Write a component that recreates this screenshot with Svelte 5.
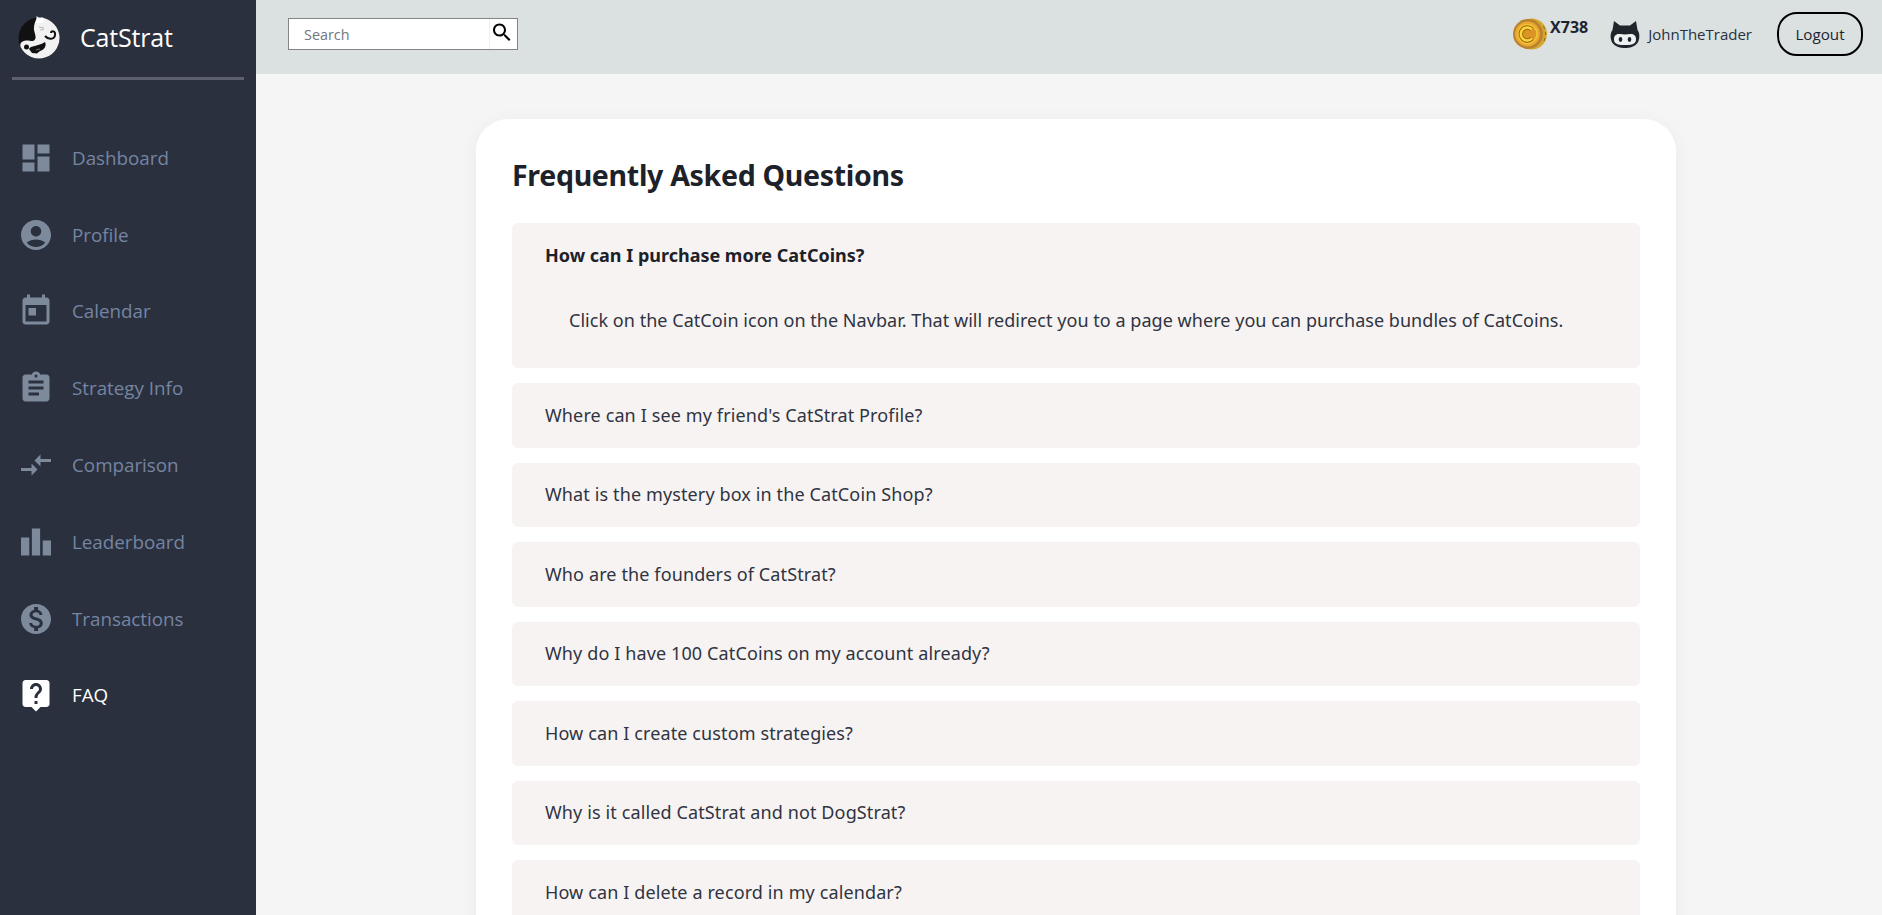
<script>
	const nav = [
		{ label: 'Dashboard', d: 'M3 13h8V3H3v10zm0 8h8v-6H3v6zm10 0h8V11h-8v10zm0-18v6h8V3h-8z' },
		{ label: 'Profile', d: 'M12 2C6.48 2 2 6.48 2 12s4.48 10 10 10 10-4.48 10-10S17.52 2 12 2zm0 4c1.93 0 3.5 1.57 3.5 3.5S13.93 13 12 13s-3.5-1.57-3.5-3.5S10.07 6 12 6zm0 14c-2.03 0-4.43-.82-6.14-2.88C7.55 15.8 9.68 15 12 15s4.45.8 6.14 2.12C16.43 19.18 14.03 20 12 20z' },
		{ label: 'Calendar', d: 'M19 3h-1V1h-2v2H8V1H6v2H5c-1.11 0-1.99.9-1.99 2L3 19c0 1.1.89 2 2 2h14c1.1 0 2-.9 2-2V5c0-1.1-.9-2-2-2zm0 16H5V8h14v11zM7 10h5v5H7z' },
		{ label: 'Strategy Info', d: 'M19 3h-4.18C14.4 1.84 13.3 1 12 1c-1.3 0-2.4.84-2.82 2H5c-1.1 0-2 .9-2 2v14c0 1.1.9 2 2 2h14c1.1 0 2-.9 2-2V5c0-1.1-.9-2-2-2zm-7 0c.55 0 1 .45 1 1s-.45 1-1 1-1-.45-1-1 .45-1 1-1zm2 14H7v-2h7v2zm3-4H7v-2h10v2zm0-4H7V7h10v2z' },
		{ label: 'Comparison', d: 'M9.01 14H2v2h7.01v3L13 15l-3.99-4v3zm5.98-1v-3H22V8h-7.01V5L11 9l3.99 4z' },
		{ label: 'Leaderboard', d: 'M7.5 21H2V9h5.5v12zm7.25-18h-5.5v18h5.5V3zM22 11h-5.5v10H22V11z' },
		{ label: 'Transactions', d: 'M12 2C6.48 2 2 6.48 2 12s4.48 10 10 10 10-4.48 10-10S17.52 2 12 2zm1.41 16.09V20h-2.67v-1.93c-1.71-.36-3.16-1.46-3.27-3.4h1.96c.1 1.05.82 1.87 2.65 1.87 1.96 0 2.4-.98 2.4-1.59 0-.83-.44-1.61-2.67-2.14-2.48-.6-4.18-1.62-4.18-3.67 0-1.72 1.39-2.84 3.11-3.21V4h2.67v1.95c1.86.45 2.79 1.86 2.85 3.39H14.3c-.05-1.11-.64-1.87-2.22-1.87-1.5 0-2.4.68-2.4 1.64 0 .84.65 1.39 2.67 1.91s4.18 1.39 4.18 3.91c-.01 1.83-1.38 2.83-3.12 3.16z' },
		{ label: 'FAQ', active: true, d: 'M19 2H5c-1.11 0-2 .9-2 2v14c0 1.1.89 2 2 2h4l3 3 3-3h4c1.1 0 2-.9 2-2V4c0-1.1-.9-2-2-2zm-6 16h-2v-2h2v2zm2.07-7.75l-.9.92C13.45 11.9 13 12.5 13 14h-2v-.5c0-1.1.45-2.1 1.17-2.83l1.24-1.26c.37-.36.59-.86.59-1.41 0-1.1-.9-2-2-2s-2 .9-2 2H8c0-2.21 1.79-4 4-4s4 1.79 4 4c0 .88-.36 1.68-.93 2.25z' }
	];

	const questions = [
		"Where can I see my friend's CatStrat Profile?",
		'What is the mystery box in the CatCoin Shop?',
		'Who are the founders of CatStrat?',
		'Why do I have 100 CatCoins on my account already?',
		'How can I create custom strategies?',
		'Why is it called CatStrat and not DogStrat?',
		'How can I delete a record in my calendar?'
	];
</script>

<div class="layout">
	<aside class="sidebar">
		<div class="brand">
			<svg class="logo" viewBox="0 0 42 44" width="42" height="44">
				<circle cx="21" cy="23" r="20.5" fill="#111" />
				<!-- white cat, body wraps the right half and the bottom -->
				<path d="M19 2.600A20.500 20.500 0 1 1 2.600 32C1.500 28 4 26 8 25.500c3-.5 6 1.500 8 0 3-2 1-6 0-10.500-.5-5 1.500-9 3-12.400z" fill="#f2f2f2" />
				<path d="M18.500 1l2.500 2 4-.5 1.500 2L25 8h-6z" fill="#fff" />
				<!-- tail curl, hole on the left -->
				<circle cx="8.500" cy="32" r="2.500" fill="#111" />
				<!-- black cat, curled at the bottom -->
				<path d="M11 34c1-3.500 9-2.500 16-7 2 4-1 8-5 9l-3 2.500-5-.5z" fill="#111" />
				<path d="M27 21c4 4.500 11 3.500 10-3-.5-2.500-4-2.500-4 0" fill="none" stroke="#111" stroke-width="2" />
				<path d="M21 12l5 1M22 15l4-.5M18 35l4-1" stroke="#999" stroke-width="0.700" fill="none" />
			</svg>
			<span class="brand-name">CatStrat</span>
		</div>
		<hr class="rule" />
		<nav>
			{#each nav as item}
				<a class="nav-item" class:active={item.active} href="#{item.label}">
					<svg viewBox="0 0 24 24" width="36" height="36"><path d={item.d} /></svg>
					<span>{item.label}</span>
				</a>
			{/each}
		</nav>
	</aside>

	<div class="main">
		<header class="topbar">
			<div class="search">
				<input placeholder="Search" />
				<button aria-label="Search">
					<svg viewBox="0 0 24 24" width="25" height="25"><path d="M15.5 14h-.79l-.28-.27C15.41 12.59 16 11.11 16 9.500 16 5.910 13.090 3 9.500 3S3 5.910 3 9.500 5.910 16 9.500 16c1.610 0 3.090-.59 4.230-1.570l.27.28v.79l5 4.990L20.490 19l-4.990-5zm-6 0C7.010 14 5 11.990 5 9.500S7.010 5 9.500 5 14 7.010 14 9.500 11.990 14 9.500 14z" /></svg>
				</button>
			</div>
			<div class="account">
				<div class="coins">
					<svg viewBox="0 0 34 34" width="34" height="34">
						<circle cx="18.500" cy="17" r="15.500" fill="#d4a82e" />
						<circle cx="15" cy="17" r="15" fill="#b9822c" />
						<circle cx="14.500" cy="17" r="12.500" fill="#eaa733" />
						<circle cx="14.500" cy="17" r="9.500" fill="#dc9426" stroke="#f3c636" stroke-width="1.500" />
						<path d="M19 12.500a6.500 6.500 0 1 0 0 9" fill="none" stroke="#a3690f" stroke-width="4.500" />
						<path d="M19 12.500a6.500 6.500 0 1 0 0 9" fill="none" stroke="#f8d63c" stroke-width="2.500" />
						<path d="M30.500 9l1 3M32.500 15v3M32 21l-1 3" stroke="#8f6c18" stroke-width="1" />
					</svg>
					<span>X738</span>
				</div>
				<div class="user">
					<svg viewBox="0 0 30 27" width="30" height="27">
						<path d="M4 0l6 4.500h10L26 0l1.500 9c2.500 3 2.500 9 0 13-3 4-8 5-12.500 5S5.500 26 2.500 22c-2.500-4-2.500-10 0-13z" fill="#20242b" />
						<path d="M4 18c0-4 3-5.500 6-5 3 .5 7 .5 10 0 3-.5 6 1 6 5s-2 6-11 6-11-2-11-6z" fill="#eef1f1" />
						<ellipse cx="10.500" cy="18.500" rx="1.800" ry="2.400" fill="#20242b" />
						<ellipse cx="19.500" cy="18.500" rx="1.800" ry="2.400" fill="#20242b" />
					</svg>
					<span>JohnTheTrader</span>
				</div>
				<button class="logout">Logout</button>
			</div>
		</header>

		<main class="content">
			<section class="card">
				<h1>Frequently Asked Questions</h1>
				<div class="faq">
					<div class="item open">
						<h2>How can I purchase more CatCoins?</h2>
						<p>Click on the CatCoin icon on the Navbar. That will redirect you to a page where you can purchase bundles of CatCoins.</p>
					</div>
					{#each questions as q}
						<div class="item">{q}</div>
					{/each}
				</div>
			</section>
		</main>
	</div>
</div>

<style>
	:global(body) {
		margin: 0;
		background: #f5f5f5;
	}

	.layout {
		display: flex;
		height: 100vh;
		overflow: hidden;
		font-family: 'Open Sans', 'Liberation Sans', sans-serif;
	}

	.sidebar {
		width: 256px;
		flex: none;
		background: #2a303e;
	}

	.brand {
		display: flex;
		align-items: center;
		gap: 20px;
		height: 74px;
		padding: 0 0 0 18px;
		box-sizing: border-box;
	}

	.brand-name {
		color: #fff;
		font-size: 25px;
		letter-spacing: -0.2px;
	}

	.rule {
		height: 3px;
		margin: 3px 12px 0 12px;
		border: 0;
		background: #5d616e;
	}

	nav {
		margin-top: 39.5px;
	}

	.nav-item {
		display: flex;
		align-items: center;
		gap: 18px;
		height: 76.8px;
		padding-left: 18px;
		color: #7585a2;
		font-size: 18.8px;
		text-decoration: none;
	}

	.nav-item svg {
		fill: #7d8a9c;
		flex: none;
	}

	.nav-item.active {
		color: #fff;
	}

	.nav-item.active svg {
		fill: #fff;
	}

	.main {
		flex: 1;
		min-width: 0;
	}

	.topbar {
		display: flex;
		align-items: center;
		justify-content: space-between;
		height: 74px;
		padding: 0 19px 6px 32px;
		box-sizing: border-box;
		background: #dbe0e0;
	}

	.search {
		display: flex;
		width: 230px;
		height: 32px;
		box-sizing: border-box;
		border: 1px solid #848484;
		background: #fff;
	}

	.search input {
		flex: 1;
		min-width: 0;
		padding: 0 0 0 15px;
		border: 0;
		outline: 0;
		background: none;
		font: 14.4px 'Open Sans', sans-serif;
	}

	.search input::placeholder {
		color: #71757e;
	}

	.search button {
		display: flex;
		align-items: center;
		justify-content: center;
		width: 28px;
		padding: 0 3px 4px 0;
		border: 0;
		border-left: 1px solid #eee;
		background: none;
	}

	.account {
		display: flex;
		align-items: center;
	}

	.coins {
		display: flex;
		align-items: flex-start;
		gap: 3px;
		margin-right: 22px;
		font-size: 16px;
		font-weight: 700;
		color: #1d2430;
	}

	.coins span {
		line-height: 20px;
	}

	.user {
		display: flex;
		align-items: center;
		gap: 8px;
		margin-right: 25px;
		font-size: 15px;
		color: #2a303e;
	}

	.logout {
		width: 86px;
		height: 44px;
		border: 2px solid #000;
		border-radius: 20px;
		background: none;
		font: 15.2px 'Open Sans', sans-serif;
		color: #1d2430;
	}

	.content {
		padding: 45px 0 0 220px;
	}

	.card {
		width: 1200px;
		box-sizing: border-box;
		padding: 36px;
		border-radius: 32px;
		background: #fff;
		box-shadow: 0 4px 20px rgba(0, 0, 0, 0.05);
	}

	h1 {
		margin: 0 0 30px 0;
		height: 38px;
		font-size: 28.5px;
		line-height: 41px;
		letter-spacing: -0.3px;
		font-weight: 700;
		color: #1d2129;
		font-family: 'Noto Sans', sans-serif;
	}

	.faq {
		display: flex;
		flex-direction: column;
		gap: 15px;
	}

	.item {
		box-sizing: border-box;
		padding: 19.75px 33px;
		border-radius: 6px;
		background: #f7f3f2;
		font-family: 'Noto Sans', sans-serif;
		font-size: 18px;
		line-height: 25px;
		letter-spacing: 0.12px;
		color: #2f3442;
	}

	.item h2 {
		margin: 0;
		font-size: 18px;
		line-height: 25px;
		letter-spacing: 0;
		font-weight: 700;
		color: #1d2129;
	}

	.item p {
		margin: 40px 0 0 0;
		padding: 0 0 15.5px 24px;
		letter-spacing: 0.04px;
	}
</style>
